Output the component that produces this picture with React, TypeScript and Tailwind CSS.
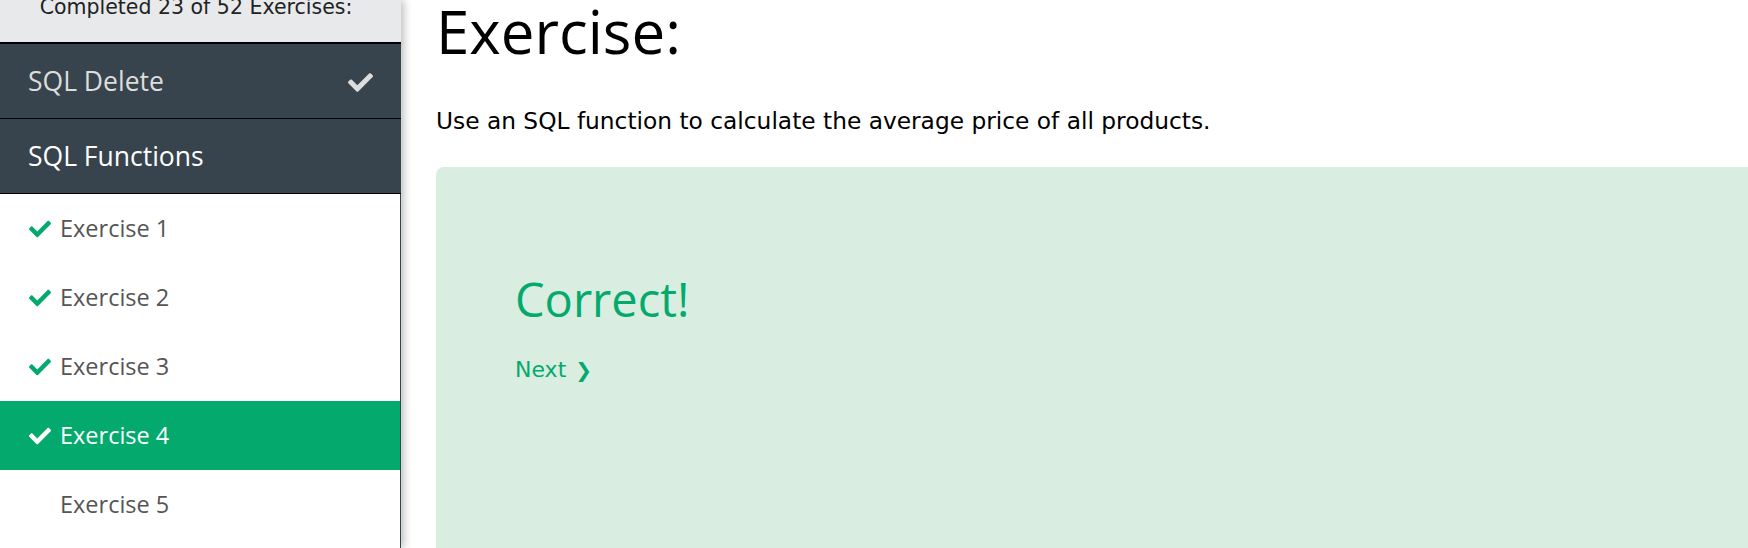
import React from 'react';
import { FaCheck } from 'react-icons/fa';

const segoe = { fontFamily: '"Open Sans", "Noto Sans", sans-serif' };

const exercises = [
  { n: 1, done: true },
  { n: 2, done: true },
  { n: 3, done: true },
  { n: 4, done: true, active: true },
  { n: 5, done: false },
];

const Sidebar: React.FC = () => (
  <aside className="w-[401px] shrink-0 flex flex-col shadow-[3px_0_8px_rgba(0,0,0,0.25)] z-10">
    <div className="h-[42px] bg-[#e7e9eb] overflow-hidden text-center pr-[9px] font-['DejaVu_Sans',sans-serif] text-[20.5px] text-[#222]">
      <div className="-mt-[8px] leading-[30px]">Completed 23 of 52 Exercises:</div>
    </div>
    <div className="h-[2px] bg-black"></div>
    <div
      className="h-[75px] bg-[#38444d] text-[#dddddd] flex items-center justify-between pl-[28px] pr-[28px] pt-[2px] text-[26.5px] border-b border-black"
      style={segoe}
    >
      <span>SQL Delete</span>
      <FaCheck className="w-[25px] h-[25px] text-[#dddddd]" />
    </div>
    <div
      className="h-[75px] bg-[#38444d] text-white flex items-center pl-[28px] pt-[2px] text-[26.5px] border-b border-black"
      style={segoe}
    >
      SQL Functions
    </div>
    <div className="flex-1 bg-white border-r border-[#38444d]">
      {exercises.map(ex => (
        <div
          key={ex.n}
          className={`h-[69px] flex items-center pl-[29px] text-[23.5px] ${
            ex.active ? 'bg-[#04aa6d] text-white' : 'text-[#555555]'
          }`}
          style={segoe}
        >
          <span className="w-[31px] shrink-0">
            {ex.done && (
              <FaCheck className={`w-[22px] h-[22px] ${ex.active ? 'text-white' : 'text-[#04aa6d]'}`} />
            )}
          </span>
          <span>Exercise {ex.n}</span>
        </div>
      ))}
    </div>
  </aside>
);

const App: React.FC = () => {
  return (
    <div className="flex w-[1748px] h-[548px] overflow-hidden bg-white">
      <Sidebar />
      <main className="flex-1 min-w-0 overflow-hidden pl-[35px]">
        <h1 className="text-[60px] leading-[64px] text-black mt-[-1px]" style={segoe}>
          Exercise:
        </h1>
        <p className="mt-[42px] text-[23.3px] leading-[32px] text-black font-['DejaVu_Sans',sans-serif]">
          Use an SQL function to calculate the average price of all products.
        </p>
        <div className="mt-[30px] w-[1340px] h-[420px] bg-[#d9eee1] rounded-[8px] pl-[79px] pt-[102px]">
          <h2 className="text-[47px] leading-[60px] text-[#04aa6d]" style={segoe}>
            Correct!
          </h2>
          <a className="mt-[24px] inline-flex items-center gap-[9px] text-[22px] text-[#04aa6d] font-['DejaVu_Sans',sans-serif]">
            Next <span className="text-[20px]">❯</span>
          </a>
        </div>
      </main>
    </div>
  );
};

export default App;
